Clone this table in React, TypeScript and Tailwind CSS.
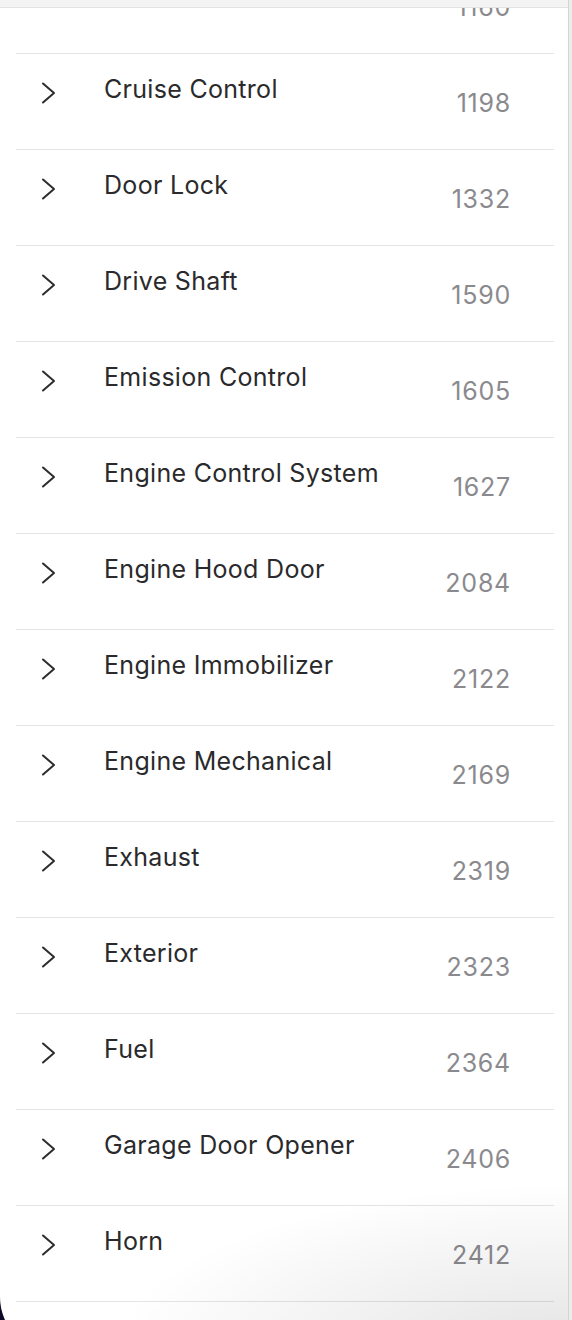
type Item = {
  title: string
  count: number
}

const items: Item[] = [
  {title: 'Cooling', count: 1160},
  {title: 'Cruise Control', count: 1198},
  {title: 'Door Lock', count: 1332},
  {title: 'Drive Shaft', count: 1590},
  {title: 'Emission Control', count: 1605},
  {title: 'Engine Control System', count: 1627},
  {title: 'Engine Hood Door', count: 2084},
  {title: 'Engine Immobilizer', count: 2122},
  {title: 'Engine Mechanical', count: 2169},
  {title: 'Exhaust', count: 2319},
  {title: 'Exterior', count: 2323},
  {title: 'Fuel', count: 2364},
  {title: 'Garage Door Opener', count: 2406},
  {title: 'Horn', count: 2412},
  {title: 'Interior', count: 2467},
]

const Row = ({title, count}: Item) => {
  return (
    <div className="flex h-[96px] border-b border-[#e4e4e6]">
      <div className="w-[88px] pl-[24px] pt-[27px]">
        <svg width="18" height="24" viewBox="0 0 18 24" fill="none">
          <polyline
            points="3,2.5 14,12 3,21.5"
            stroke="#2c2c2e"
            strokeWidth="2"
            strokeLinecap="round"
            strokeLinejoin="round"
          />
        </svg>
      </div>
      <div className="flex-1 pt-[19px] text-[25px] leading-8 tracking-[0.012em] text-[#2a2a2c]">{title}</div>
      <div className="pr-[43px] pt-[33px] text-[25px] leading-8 tracking-[0.03em] text-[#8a8a8e]">{count}</div>
    </div>
  )
}

export default function App() {
  return (
    <div
      className="relative h-[1320px] w-[572px] overflow-hidden bg-[#0c0a25]"
      style={{fontFamily: 'Inter, "Noto Sans", sans-serif'}}
    >
      <div className="flex h-[1352px] overflow-hidden rounded-bl-[55px] bg-white">
        <div className="relative flex-1 overflow-hidden">
          <div className="-mt-[42px] ml-4 w-[538px]">
            {items.map((item) => (
              <Row key={item.title} {...item} />
            ))}
          </div>
          <div className="absolute left-0 right-0 top-0 h-[8px] border-b border-[#e2e2e2] bg-[#f3f3f3]" />
          <div className="pointer-events-none absolute bottom-0 right-0 h-[170px] w-[460px] bg-[radial-gradient(ellipse_at_100%_100%,rgba(0,0,0,0.11),rgba(0,0,0,0)_70%)]" />
        </div>
        <div className="w-[4px] border-l border-[#d4d4d4] bg-[#ececec]" />
      </div>
    </div>
  )
}
